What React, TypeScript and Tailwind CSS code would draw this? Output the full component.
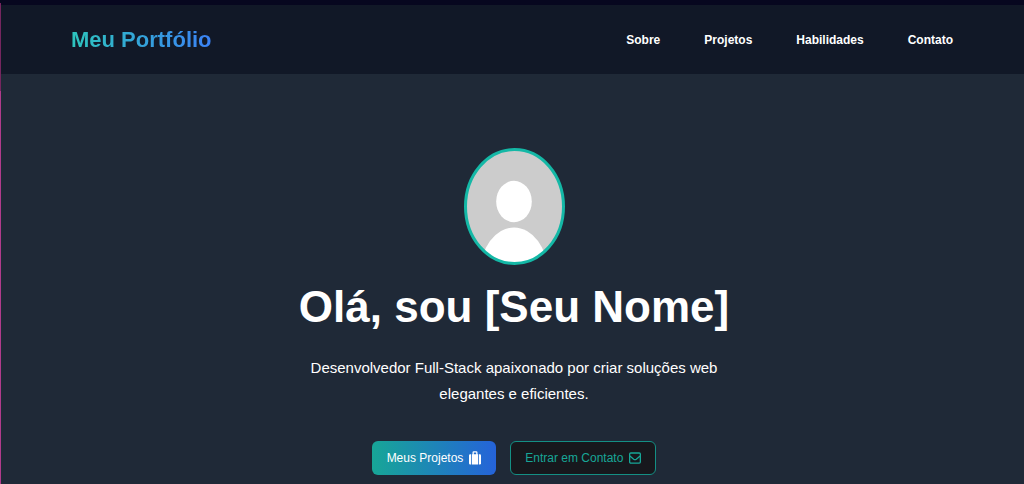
const NAV_LINKS = [
  { label: "Sobre", href: "#sobre" },
  { label: "Projetos", href: "#projetos" },
  { label: "Habilidades", href: "#habilidades" },
  { label: "Contato", href: "#contato" },
];

function Header() {
  return (
    <header className="border-t-[5px] border-[#07071f] bg-[#111827] px-6">
      <div className="mx-auto flex h-[69px] max-w-[882px] items-center justify-between">
        <a
          href="#inicio"
          className="bg-linear-to-r/srgb from-[#2dc4bd] to-[#3b82f6] bg-clip-text text-[22px] font-bold text-transparent"
        >
          Meu Portfólio
        </a>
        <nav className="flex gap-11 text-[12px] font-bold text-white">
          {NAV_LINKS.map((link) => (
            <a key={link.href} href={link.href}>
              {link.label}
            </a>
          ))}
        </nav>
      </div>
    </header>
  );
}

function Avatar() {
  return (
    <svg viewBox="0 0 101 117" className="h-[117px] w-[101px]" aria-hidden="true">
      <defs>
        <clipPath id="avatar-clip">
          <ellipse cx="50.5" cy="58.5" rx="49" ry="57" />
        </clipPath>
      </defs>
      <g clipPath="url(#avatar-clip)">
        <rect width="101" height="117" fill="#cccccc" />
        <ellipse cx="50" cy="53.5" rx="17.8" ry="20.7" fill="#ffffff" />
        <ellipse cx="50" cy="126" rx="34" ry="46.5" fill="#ffffff" />
      </g>
      <ellipse cx="50.5" cy="58.5" rx="49" ry="57" fill="none" stroke="#14b8a6" strokeWidth="3" />
    </svg>
  );
}

function SuitcaseIcon() {
  return (
    <svg viewBox="0 0 12 14" className="h-[14px] w-3" fill="currentColor" aria-hidden="true">
      <path d="M2 3.2v10.2h-.8A1.2 1.2 0 0 1 0 12.200V4.400a1.2 1.2 0 0 1 1.200-1.200z" />
      <path d="M10 3.200v10.200h.8a1.200 1.200 0 0 0 1.200-1.200V4.400a1.200 1.200 0 0 0-1.200-1.200z" />
      <path d="M2.800 3.200h.7V1.500A1.200 1.200 0 0 1 4.700.3h2.600a1.200 1.200 0 0 1 1.200 1.200v1.700h.7v10.200H2.800zM4.800 1.600v1.600h2.400V1.600z" />
    </svg>
  );
}

function EnvelopeIcon() {
  return (
    <svg
      viewBox="0 0 12 12"
      className="h-3 w-3"
      fill="none"
      stroke="currentColor"
      strokeWidth="1.3"
      aria-hidden="true"
    >
      <rect x=".65" y="1" width="10.700" height="10.200" rx="1.100" />
      <path d="M.9 3.900 4.700 7.200q1.300 1 2.600 0l3.800-3.300" />
    </svg>
  );
}

export default function App() {
  return (
    <div
      id="inicio"
      className="relative min-h-screen bg-[#1f2937] font-['Liberation_Sans',Arial,sans-serif]"
    >
      <div
        className="absolute bottom-0 left-0 top-[3px] w-px bg-linear-to-b from-[#75265f] from-[88px] to-[#b03b8c] to-[88px]"
        aria-hidden="true"
      />
      <Header />

      <main className="flex flex-col items-center pb-2 pl-7 pr-6 pt-[74px] text-center text-white">
        <Avatar />
        <h1 className="mt-[14px] text-[44px] font-bold leading-[56px]">Olá, sou [Seu Nome]</h1>
        <p className="mt-5 max-w-[420px] text-[15px] leading-[26px]">
          Desenvolvedor Full-Stack apaixonado por criar soluções web elegantes e eficientes.
        </p>
        <div className="mt-[34px] flex gap-[14px] text-[12px]">
          <a
            href="#projetos"
            className="flex h-[34px] items-center gap-[6px] rounded-md bg-linear-to-r/srgb from-[#17a697] to-[#2563d9] px-[15px]"
          >
            Meus Projetos
            <SuitcaseIcon />
          </a>
          <a
            href="#contato"
            className="flex h-[34px] items-center gap-[6px] rounded-md border border-[#148f84] bg-[#17181d] px-[14px] text-[#17a697]"
          >
            Entrar em Contato
            <EnvelopeIcon />
          </a>
        </div>
      </main>
    </div>
  );
}
